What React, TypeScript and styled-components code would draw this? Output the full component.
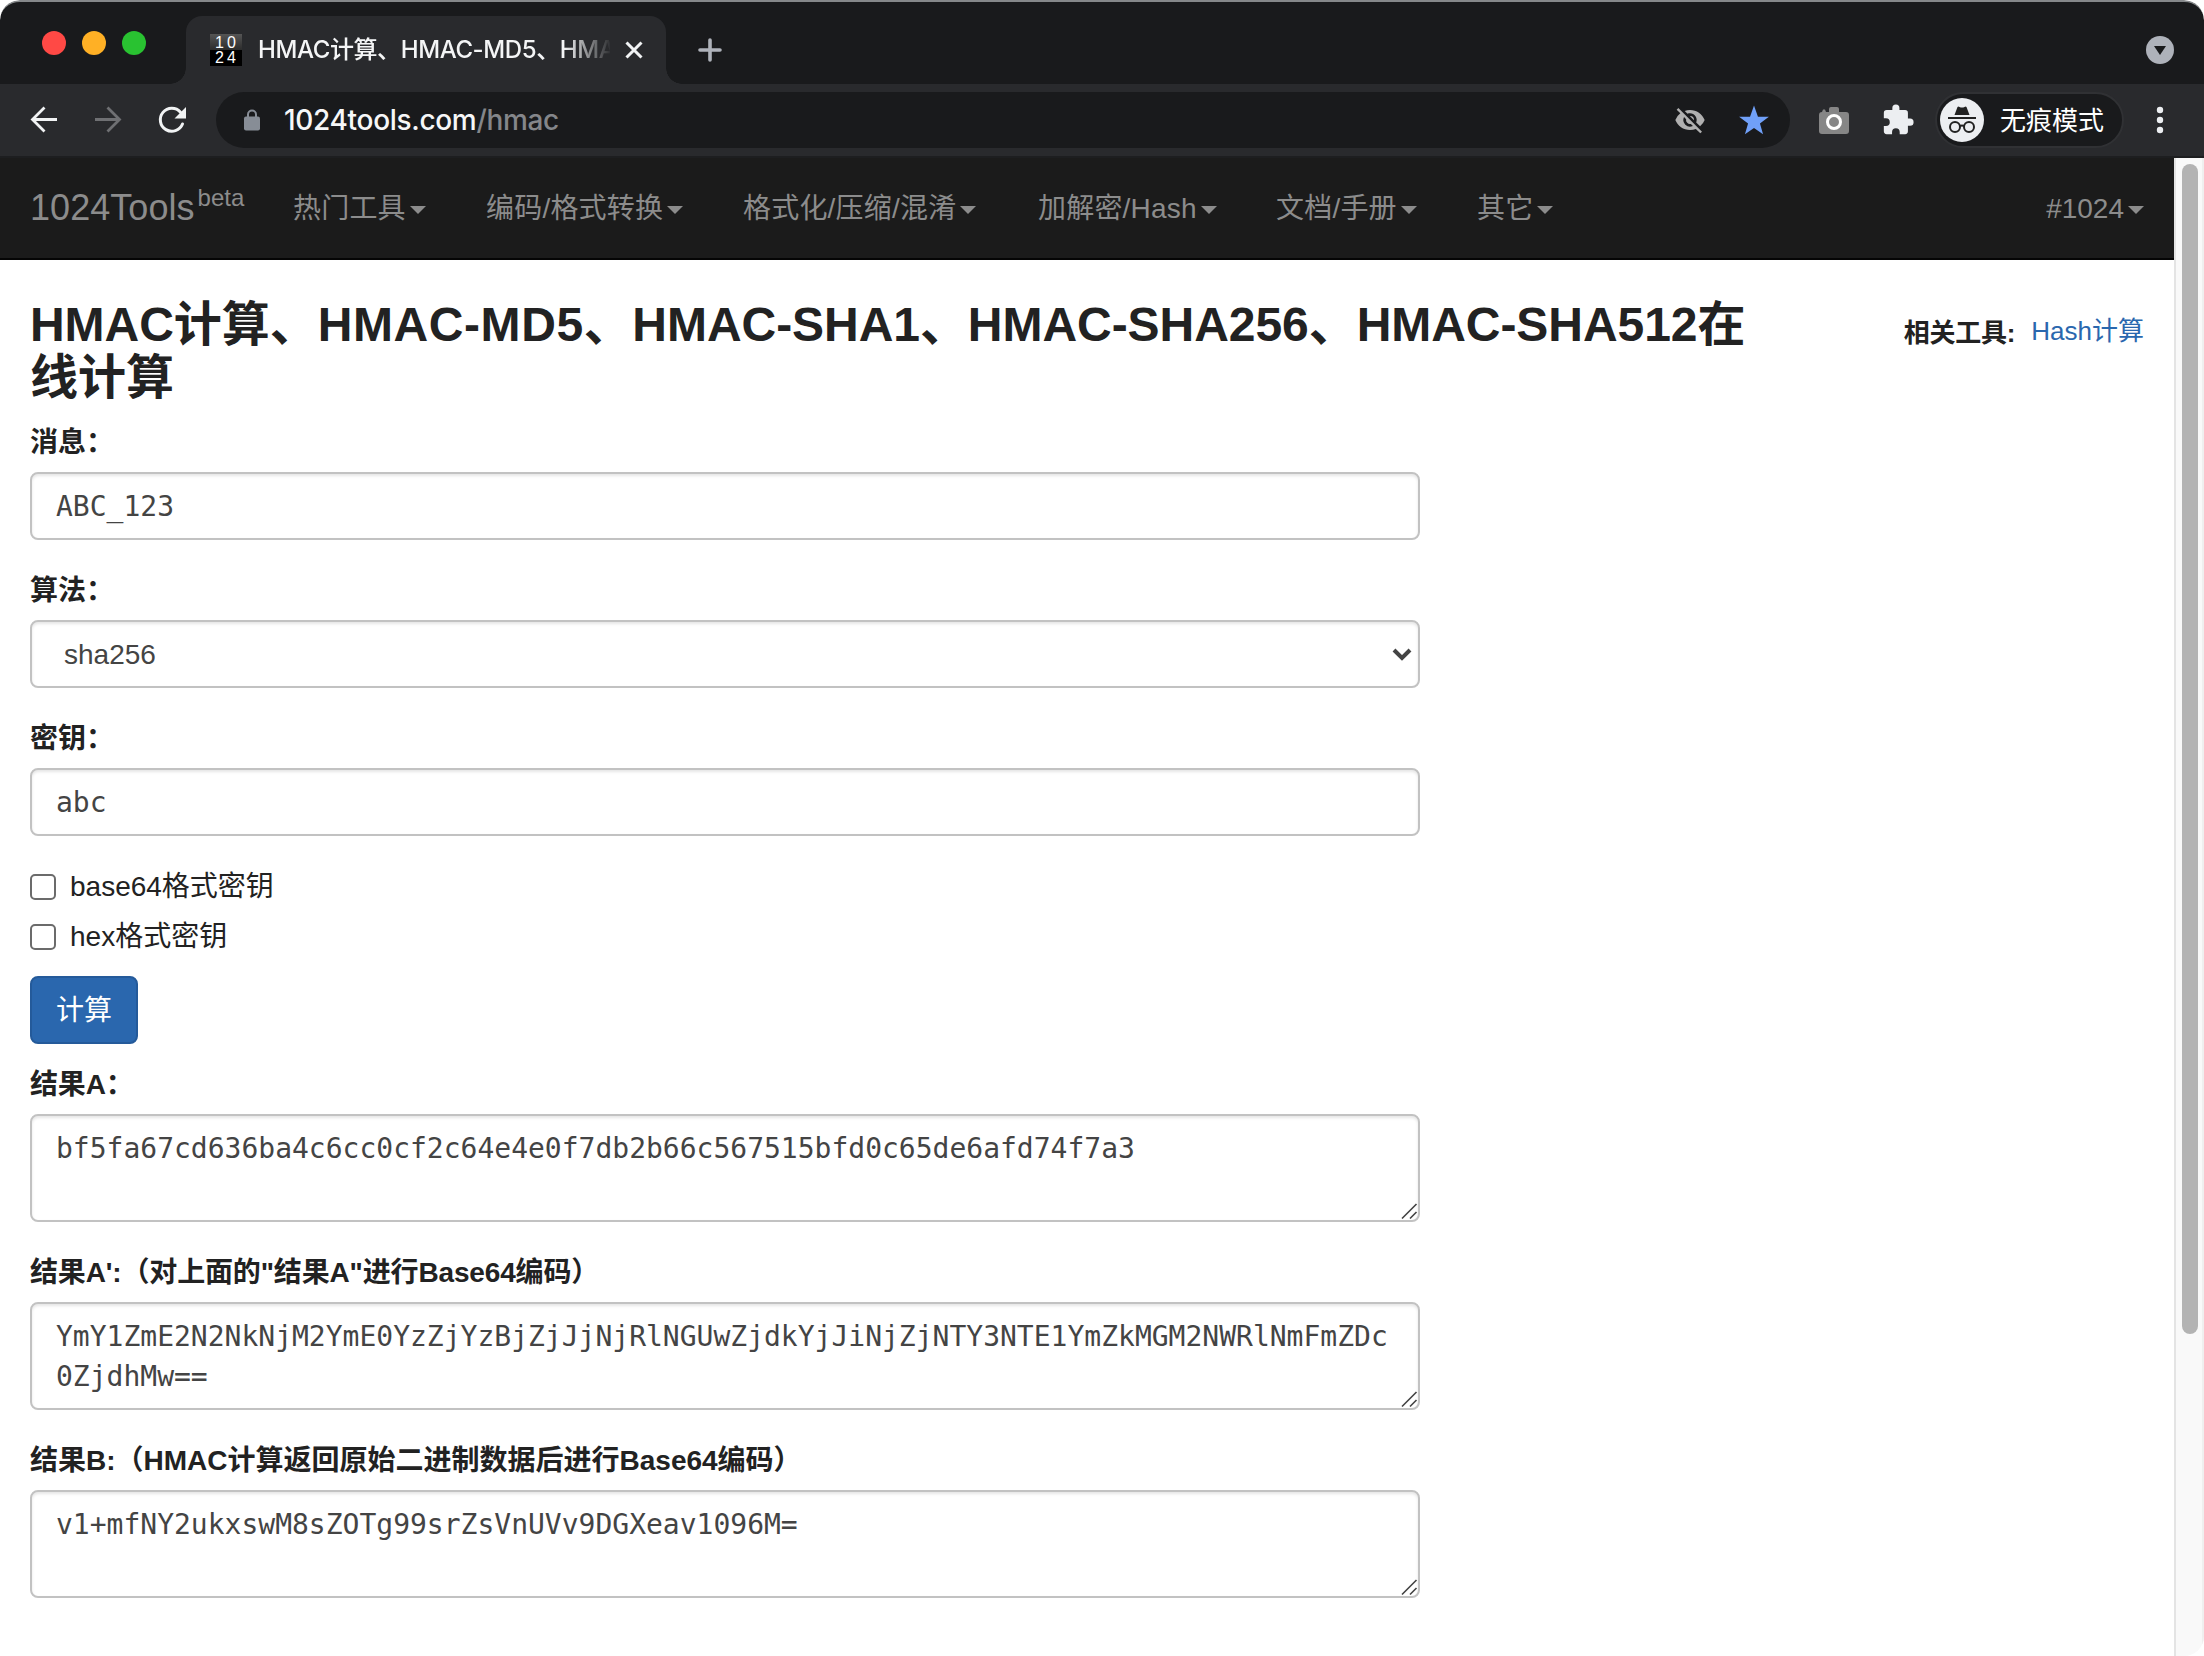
import React from 'react';
import styled, { createGlobalStyle } from 'styled-components';

const sans = `"Liberation Sans", "Noto Sans CJK SC", sans-serif`;
const ui = `Inter, "Noto Sans CJK SC", sans-serif`;
const mono = `"DejaVu Sans Mono", monospace`;

const GlobalStyle = createGlobalStyle`
  * { box-sizing: border-box; }
  html, body { margin: 0; padding: 0; background: #fff; overflow: hidden; }
`;

const Window = styled.div`
  width: 2204px;
  height: 1656px;
  display: flex;
  flex-direction: column;
  overflow: hidden;
  border-radius: 20px;
  background: #fff;
  font-family: ${sans};
  font-size: 28px;
  line-height: 40px;
  color: #222;
`;

const TabStrip = styled.div`
  height: 84px;
  flex: none;
  display: flex;
  align-items: flex-end;
  background: #191a1c;
  border-top: 2px solid #85888a;
  border-radius: 20px 20px 0 0;
`;

const Lights = styled.div`
  width: 186px;
  height: 82px;
  padding: 29px 0 0 42px;
  display: flex;
  gap: 16px;
`;

const Light = styled.span<{ $color: string }>`
  width: 24px;
  height: 24px;
  border-radius: 50%;
  background: ${(p) => p.$color};
`;

const Tab = styled.div`
  position: relative;
  width: 480px;
  height: 68px;
  padding: 0 20px 0 24px;
  display: flex;
  align-items: center;
  background: #292a2d;
  border-radius: 16px 16px 0 0;
  &::before, &::after {
    content: '';
    position: absolute;
    bottom: 0;
    width: 16px;
    height: 16px;
  }
  &::before {
    left: -16px;
    background: radial-gradient(circle at 0 0, transparent 15.5px, #292a2d 16px);
  }
  &::after {
    right: -16px;
    background: radial-gradient(circle at 100% 0, transparent 15.5px, #292a2d 16px);
  }
`;

const Favicon = styled.div`
  width: 32px;
  height: 32px;
  flex: none;
  display: flex;
  flex-direction: column;
  background: linear-gradient(#555 0, #2c2c2c 50%, #000 50%);
  color: #fff;
  font-size: 16px;
  line-height: 15px;
  padding-top: 1px;
  letter-spacing: 3px;
  text-indent: 5px;
`;

const TabTitle = styled.div`
  width: 352px;
  margin-left: 16px;
  white-space: nowrap;
  font-family: ${ui};
  font-size: 24px;
  font-weight: 450;
  letter-spacing: -0.4px;
  line-height: 36px;
  color: #f4f5f6;
  mask-image: linear-gradient(90deg, #000 306px, transparent 354px);
`;

const TabClose = styled.svg`
  margin-left: 14px;
  flex: none;
`;

const NewTab = styled.svg`
  margin: 0 0 22px 32px;
`;

const TabSearch = styled.svg`
  margin: 0 30px 20px auto;
`;

const Toolbar = styled.div`
  height: 74px;
  flex: none;
  display: flex;
  align-items: center;
  padding-left: 28px;
  background: #292a2d;
  border-bottom: 2px solid #1d1e20;
`;

const NavIcon = styled.svg`
  flex: none;
  margin-right: 32px;
`;

const AddressBar = styled.div`
  width: 1574px;
  height: 56px;
  margin-left: -4px;
  padding: 0 19px 0 27px;
  display: flex;
  align-items: center;
  border-radius: 28px;
  background: #191a1c;
  font-family: ${ui};
  font-size: 28px;
  font-weight: 450;
  color: #f6f7f8;
`;

const Url = styled.div`
  flex: 1;
  margin-left: 23px;
  letter-spacing: -0.32px;
`;

const Path = styled.span`
  color: #84868a;
`;

const BarIcon = styled.svg<{ $left: number }>`
  flex: none;
  margin-left: ${(p) => p.$left}px;
`;

const Incognito = styled.div`
  width: 189px;
  height: 56px;
  margin-left: 20px;
  padding-left: 3px;
  display: flex;
  align-items: center;
  gap: 16px;
  border: 2px solid #303134;
  border-radius: 28px;
  background: #191a1c;
  color: #fff;
  font-family: ${ui};
  font-size: 26px;
  white-space: nowrap;
`;

const IncognitoText = styled.span`
  padding-top: 2px;
`;

const View = styled.div`
  flex: 1;
  display: flex;
  min-height: 0;
`;

const Page = styled.div`
  width: 2174px;
`;

const Scrollbar = styled.div`
  width: 30px;
  padding: 6px 6px 0 6px;
  background: #f9f9f9;
  border-left: 2px solid #e4e4e4;
  border-right: 2px solid #efefef;
`;

const Thumb = styled.div`
  width: 16px;
  height: 1170px;
  border-radius: 8px;
  background: #b3b3b3;
`;

const Navbar = styled.nav`
  height: 102px;
  padding: 2px 30px 0;
  display: flex;
  align-items: center;
  background: #1b1b1b;
  border-bottom: 2px solid #050505;
  color: #8c8c8c;
`;

const Brand = styled.div`
  width: 263px;
  padding-bottom: 2px;
  font-size: 36px;
  letter-spacing: 0.05px;
  white-space: nowrap;
`;

const Beta = styled.sup`
  font-size: 24px;
  line-height: 0;
  position: relative;
  top: -14px;
  margin-left: 3px;
  vertical-align: baseline;
`;

const NavItem = styled.div<{ $w?: number }>`
  width: ${(p) => (p.$w ? `${p.$w}px` : 'auto')};
  margin-left: ${(p) => (p.$w ? 0 : 'auto')};
  display: flex;
  align-items: center;
  white-space: nowrap;
  letter-spacing: ${(p) => (p.$w ? 0.2 : 0)}px;
`;

const Caret = styled.span`
  margin: 1px 0 0 4px;
  border: 8px solid transparent;
  border-top-color: #8c8c8c;
  border-bottom: 0;
`;

const Content = styled.main`
  padding: 39px 30px 0;
`;

const Header = styled.header`
  display: flex;
  justify-content: space-between;
  height: 124px;
`;

const Title = styled.h3`
  width: 1740px;
  margin: 0;
  font-size: 48px;
  font-weight: 700;
  line-height: 52.8px;
  white-space: nowrap;
  letter-spacing: -0.05px;
`;

const Wide = styled.span`
  letter-spacing: 0.6px;
`;

const Related = styled.div`
  padding-top: 12px;
  display: flex;
  gap: 16px;
  white-space: nowrap;
  font-size: 26px;
`;

const Strong = styled.strong`
  padding-top: 2px;
  letter-spacing: -0.2px;
`;

const Link = styled.a`
  color: #2a67ae;
`;

const Form = styled.form`
  width: 1390px;
  display: flex;
  flex-direction: column;
  align-items: stretch;
`;

const Label = styled.label<{ $tight?: boolean }>`
  height: 40px;
  margin-bottom: 9px;
  font-weight: 700;
  white-space: nowrap;
  letter-spacing: ${(p) => (p.$tight ? -0.15 : 0)}px;
`;

const Control = styled.div<{ $sans?: boolean; $tall?: boolean }>`
  position: relative;
  height: ${(p) => (p.$tall ? 108 : 68)}px;
  margin-bottom: 31px;
  padding: 13px ${(p) => (p.$sans ? 6 : 24)}px 0 ${(p) => (p.$sans ? 32 : 24)}px;
  display: flex;
  justify-content: space-between;
  border: 2px solid #c2c2c2;
  border-radius: 8px;
  box-shadow: inset 0 2px 3px rgba(0, 0, 0, 0.1);
  background: #fff;
  font-family: ${(p) => (p.$sans ? sans : mono)};
  color: #444;
  word-break: break-all;
`;

const Grip = styled.svg`
  position: absolute;
  right: 0;
  bottom: 0;
`;

const Chevron = styled.svg`
  margin-top: 12px;
`;

const Check = styled.div`
  height: 40px;
  margin-bottom: 10px;
  display: flex;
  align-items: center;
  gap: 14px;
`;

const Box = styled.span`
  width: 26px;
  height: 26px;
  border: 2px solid #6b6b6b;
  border-radius: 5px;
  background: #fff;
`;

const Submit = styled.button`
  width: 108px;
  height: 68px;
  margin: 9px 0 21px;
  padding: 2px 0 0;
  border: 2px solid #245a9a;
  border-radius: 8px;
  background: #2a67ae;
  color: #fff;
  font: 28px/40px ${sans};
`;

const menus: [string, number][] = [
  ['热门工具', 193],
  ['编码/格式转换', 257],
  ['格式化/压缩/混淆', 295],
  ['加解密/Hash', 238],
  ['文档/手册', 201],
  ['其它', 120],
];

function Area({ children }: { children: React.ReactNode }) {
  return (
    <Control $tall>
      {children}
      <Grip width="18" height="18" viewBox="0 0 18 18" stroke="#444" strokeWidth="1.6" fill="none">
        <path d="M2 16.500L16.500 2M10 16.500l6.500-6.500" />
      </Grip>
    </Control>
  );
}

export default function App() {
  return (
    <>
      <GlobalStyle />
      <Window>
        <TabStrip>
          <Lights>
            <Light $color="#ff4945" />
            <Light $color="#ffb025" />
            <Light $color="#29c231" />
          </Lights>
          <Tab>
            <Favicon>
              <span>10</span>
              <span>24</span>
            </Favicon>
            <TabTitle>HMAC计算、HMAC-MD5、HMA</TabTitle>
            <TabClose width="20" height="20" viewBox="0 0 20 20" stroke="#f1f3f4" strokeWidth="3">
              <path d="M2.500 2.500l15 15M17.500 2.500l-15 15" />
            </TabClose>
          </Tab>
          <NewTab width="24" height="24" viewBox="0 0 24 24" stroke="#aeb2ba" strokeWidth="3.600" strokeLinecap="round">
            <path d="M12 2v20M2 12h20" />
          </NewTab>
          <TabSearch width="28" height="28" viewBox="0 0 28 28">
            <circle cx="14" cy="14" r="14" fill="#aeb2ba" />
            <path d="M8 10h12l-6 9z" fill="#191a1c" />
          </TabSearch>
        </TabStrip>

        <Toolbar>
          <NavIcon width="32" height="32" viewBox="0 0 32 32" fill="none" stroke="#f1f3f4" strokeWidth="2.800">
            <path d="M29 15.500H5M16.500 3.500l-12 12 12 12" />
          </NavIcon>
          <NavIcon width="32" height="32" viewBox="0 0 32 32" fill="none" stroke="#6f7073" strokeWidth="2.800">
            <path d="M3 15.500h24M15.500 3.500l12 12-12 12" />
          </NavIcon>
          <NavIcon width="32" height="32" viewBox="0 0 32 32">
            <path
              d="M26.500 20A11.500 11.500 0 1 1 24.500 8.200"
              fill="none"
              stroke="#f1f3f4"
              strokeWidth="3"
              strokeLinecap="round"
            />
            <path d="M30 3v11.500H18.500z" fill="#f1f3f4" />
          </NavIcon>
          <AddressBar>
            <svg width="18" height="24" viewBox="0 0 18 24">
              <rect x="1" y="8.500" width="16" height="14" rx="2" fill="#878d96" />
              <path d="M5 9.500V6.500a4 4 0 0 1 8 0v3" fill="none" stroke="#878d96" strokeWidth="2" />
            </svg>
            <Url>
              1024tools.com<Path>/hmac</Path>
            </Url>
            <BarIcon $left={0} width="32" height="32" viewBox="0 0 24 24" fill="#b0b0b0">
              <path d="M12 7a5 5 0 0 1 4.650 6.850l2.920 2.920A11.800 11.800 0 0 0 23 12C21.270 7.610 17 4.500 12 4.500c-1.400 0-2.740.25-3.980.7l2.160 2.160C10.740 7.130 11.350 7 12 7zM2 4.270l2.740 2.740A11.800 11.800 0 0 0 1 12c1.730 4.390 6 7.500 11 7.500 1.550 0 3.030-.3 4.380-.84L19.730 22 21 20.730 3.270 3zM7.530 9.800l1.550 1.550a3 3 0 0 0 3.570 3.570l1.550 1.550A5 5 0 0 1 7.530 9.800zm4.310-.78l3.150 3.150.02-.16a3 3 0 0 0-3-3z" />
            </BarIcon>
            <BarIcon $left={31} width="34" height="34" viewBox="0 0 24 24" fill="#70a0f8">
              <path d="M12 17.600l6.400 4.400-2.200-7.600L22.500 9.700h-7.700L12 1.700 9.200 9.700H1.500l6.300 4.700L5.600 22z" />
            </BarIcon>
          </AddressBar>
          <BarIcon $left={29} width="30" height="30" viewBox="0 0 30 30">
            <path
              d="M3 7l1-2.500h2L7 7h3V4a2 2 0 0 1 2-2h6a2 2 0 0 1 2 2v3h7a3 3 0 0 1 3 3v16a3 3 0 0 1-3 3H3a3 3 0 0 1-3-3V10a3 3 0 0 1 3-3z"
              fill="#868686"
            />
            <circle cx="15" cy="17" r="6.500" fill="#868686" stroke="#fff" strokeWidth="3" />
          </BarIcon>
          <BarIcon $left={32} width="34" height="34" viewBox="0 0 24 24" fill="#eceef1">
            <path d="M20.500 11H19V7a2 2 0 0 0-2-2h-4V3.500a2.500 2.500 0 0 0-5 0V5H4a2 2 0 0 0-2 2v3.800h1.500a2.700 2.700 0 0 1 0 5.400H2V20a2 2 0 0 0 2 2h3.800v-1.500a2.700 2.700 0 0 1 5.400 0V22H17a2 2 0 0 0 2-2v-4h1.500a2.500 2.500 0 0 0 0-5z" />
          </BarIcon>
          <Incognito>
            <svg width="44" height="44" viewBox="0 0 44 44">
              <circle cx="22" cy="22" r="22" fill="#eceef1" />
              <path d="M14.500 17l3-8q1-1 2 0 2.500 1 5 0 1-1 2 0l3 8z" fill="#222" />
              <path d="M8 20h28" stroke="#222" strokeWidth="2" />
              <g fill="none" stroke="#222" strokeWidth="2">
                <circle cx="15" cy="29" r="5" />
                <circle cx="29" cy="29" r="5" />
                <path d="M20 28q2-1 4 0" />
              </g>
            </svg>
            <IncognitoText>无痕模式</IncognitoText>
          </Incognito>
          <BarIcon $left={32} width="8" height="28" viewBox="0 0 8 28" fill="#eceef1">
            <circle cx="4" cy="4" r="3.200" />
            <circle cx="4" cy="14" r="3.200" />
            <circle cx="4" cy="24" r="3.200" />
          </BarIcon>
        </Toolbar>

        <View>
          <Page>
            <Navbar>
              <Brand>
                1024Tools<Beta>beta</Beta>
              </Brand>
              {menus.map(([label, w]) => (
                <NavItem key={label} $w={w}>
                  {label}
                  <Caret />
                </NavItem>
              ))}
              <NavItem>
                #1024
                <Caret />
              </NavItem>
            </Navbar>
            <Content>
              <Header>
                <Title>
                  HMAC计算、<Wide>HMAC-MD5、</Wide>HMAC-SHA1、HMAC-SHA256、HMAC-SHA512在
                  <br />
                  线计算
                </Title>
                <Related>
                  <Strong>相关工具:</Strong>
                  <Link>Hash计算</Link>
                </Related>
              </Header>
              <Form>
                <Label>消息：</Label>
                <Control>ABC_123</Control>
                <Label>算法：</Label>
                <Control $sans>
                  sha256
                  <Chevron width="20" height="14" viewBox="0 0 20 14" fill="none" stroke="#444" strokeWidth="4">
                    <path d="M2 3l8 8 8-8" />
                  </Chevron>
                </Control>
                <Label>密钥：</Label>
                <Control>abc</Control>
                <Check>
                  <Box />
                  base64格式密钥
                </Check>
                <Check>
                  <Box />
                  hex格式密钥
                </Check>
                <Submit type="button">计算</Submit>
                <Label $tight>结果A：</Label>
                <Area>bf5fa67cd636ba4c6cc0cf2c64e4e0f7db2b66c567515bfd0c65de6afd74f7a3</Area>
                <Label $tight>结果A':（对上面的"结果A"进行Base64编码）</Label>
                <Area>
                  YmY1ZmE2N2NkNjM2YmE0YzZjYzBjZjJjNjRlNGUwZjdkYjJiNjZjNTY3NTE1YmZkMGM2NWRlNmFmZDc0ZjdhMw==
                </Area>
                <Label>结果B:（HMAC计算返回原始二进制数据后进行Base64编码）</Label>
                <Area>v1+mfNY2ukxswM8sZOTg99srZsVnUVv9DGXeav1096M=</Area>
              </Form>
            </Content>
          </Page>
          <Scrollbar>
            <Thumb />
          </Scrollbar>
        </View>
      </Window>
    </>
  );
}
